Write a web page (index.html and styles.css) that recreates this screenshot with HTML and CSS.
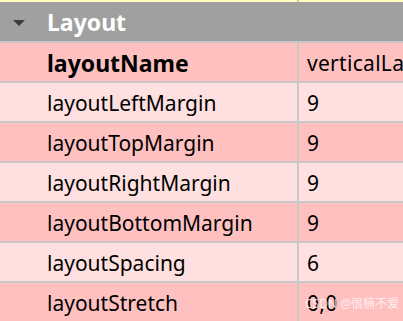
FILE: index.html
```
<!DOCTYPE html>
<html>
<head>
<meta charset="utf-8">
<link rel="stylesheet" href="styles.css">
</head>
<body>
<div class="topbar"><div class="topline"></div><div class="topline"></div></div>
<div class="group">
  <svg class="arrow" width="14" height="8" viewBox="0 0 14 8"><path d="M1 1 L13 1 L7 7 Z" fill="#3c3c3c"/></svg>
  <span class="group-title">Layout</span>
</div>
<div class="table">
  <div class="cell dark key bold">layoutName</div>
  <div class="cell dark val">verticalLayout</div>
  <div class="cell light key">layoutLeftMargin</div>
  <div class="cell light val">9</div>
  <div class="cell dark key">layoutTopMargin</div>
  <div class="cell dark val">9</div>
  <div class="cell light key">layoutRightMargin</div>
  <div class="cell light val">9</div>
  <div class="cell dark key">layoutBottomMargin</div>
  <div class="cell dark val">9</div>
  <div class="cell light key">layoutSpacing</div>
  <div class="cell light val">6</div>
  <div class="cell dark key">layoutStretch</div>
  <div class="cell dark val">0,0</div>
</div>
<div class="watermark">CSDN @很楠不爱</div>
</body>
</html>
```
FILE: styles.css
```
html, body {
  margin: 0;
  padding: 0;
  width: 403px;
  height: 321px;
  overflow: hidden;
  background: #ffc0c0;
}
body {
  position: relative;
  font-family: "Noto Sans", "Open Sans", sans-serif;
}
.topbar {
  display: grid;
  grid-template-columns: 297px 1fr;
  column-gap: 2px;
  height: 2px;
  background: #c8c8c8;
}
.topline {
  background: #ffffc0;
}
.group {
  height: 39px;
  background: #a0a0a0;
  display: flex;
  align-items: center;
}
.arrow {
  margin-left: 12px;
  margin-top: 2px;
}
.group-title {
  margin-left: 21px;
  color: #ffffff;
  font-weight: bold;
  font-size: 23px;
}
.table {
  display: grid;
  grid-template-columns: 297px 1fr;
  grid-auto-rows: 38px;
  gap: 2px;
  padding-top: 2px;
  background: #c8c8c8;
}
.cell {
  display: flex;
  align-items: center;
  font-size: 21px;
  color: #000;
  white-space: nowrap;
  overflow: hidden;
  padding-top: 2px;
}
.dark { background: #ffc0c0; }
.light { background: #ffe0e0; }
.key { padding-left: 47px; }
.val { padding-left: 8px; letter-spacing: 0.3px; }
.cell.bold { font-weight: bold; font-size: 23px; }
.watermark {
  position: absolute;
  right: 4px;
  bottom: 9px;
  font-size: 12px;
  color: rgba(255, 255, 255, 0.75);
  font-family: "Noto Sans", "Noto Sans CJK SC", sans-serif;
}
```
